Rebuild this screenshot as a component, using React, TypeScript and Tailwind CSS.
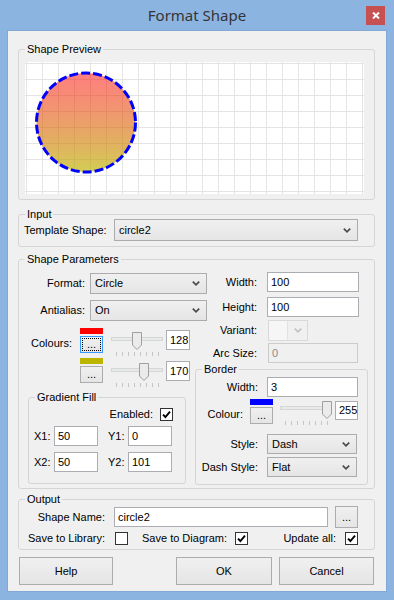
const ticks = [5, 11, 17, 23, 29, 35, 41, 47]

function Chevron({ color = '#4a4a4a' }: { color?: string }) {
  return (
    <svg width="8" height="5" viewBox="0 0 8 5">
      <path d="M0.8 0.6 L4 3.8 L7.2 0.6" fill="none" stroke={color} strokeWidth="1.7" />
    </svg>
  )
}

function Group({ title, className, children }: { title: string; className: string; children: React.ReactNode }) {
  return (
    <fieldset className={`rounded-[3px] border border-[#d5d5d5] ${className}`}>
      <legend className="ml-[6px] h-[12px] px-[2px] leading-[12px]">{title}</legend>
      {children}
    </fieldset>
  )
}

function Combo({ text, className }: { text: string; className: string }) {
  return (
    <div className={`flex shrink-0 items-center justify-between border border-[#acacac] bg-gradient-to-b from-[#f0f0f0] to-[#e5e5e5] pl-[4px] pr-[6px] ${className}`}>
      <span>{text}</span>
      <Chevron />
    </div>
  )
}

function TextBox({ text, className, disabled }: { text: string; className: string; disabled?: boolean }) {
  return (
    <div
      className={`flex shrink-0 items-center border px-[3px] ${
        disabled ? 'border-[#cccccc] bg-[#f0f0f0] text-[#8a8a8a]' : 'border-[#abadb3] bg-white'
      } ${className}`}
    >
      {text}
    </div>
  )
}

function Button({ text, className }: { text: string; className: string }) {
  return (
    <div className={`flex shrink-0 items-center justify-center border border-[#acacac] bg-gradient-to-b from-[#f0f0f0] to-[#e5e5e5] ${className}`}>
      {text}
    </div>
  )
}

function Checkbox({ checked, className = '' }: { checked?: boolean; className?: string }) {
  return (
    <div className={`flex h-[13px] w-[13px] shrink-0 items-center justify-center border border-[#333333] bg-white ${className}`}>
      {checked && (
        <svg width="9" height="9" viewBox="0 0 9 9">
          <path d="M1 4.6 L3.4 7 L8 1.6" fill="none" stroke="#000" strokeWidth="1.9" />
        </svg>
      )}
    </div>
  )
}

function Slider({ value, className }: { value: number; className: string }) {
  const x = Math.round((value / 255) * 42)
  return (
    <svg className={`shrink-0 ${className}`} width="52" height="24" viewBox="0 0 52 24">
      <rect x="0.5" y="5.5" width="51" height="3" fill="#e7eaea" stroke="#d6d6d6" />
      {ticks.map((t) => (
        <line key={t} x1={t + 0.5} x2={t + 0.5} y1="20" y2="24" stroke="#c4c4c4" />
      ))}
      <path d={`M${x + 0.5} 0.5 h9 v12.5 l-4.5 4.5 l-4.5 -4.5 z`} fill="#ebebeb" stroke="#9f9f9f" />
    </svg>
  )
}

function ColourPick({ colour, focused, className }: { colour: string; focused?: boolean; className: string }) {
  return (
    <div className={`w-[23px] shrink-0 ${className}`}>
      <div className="h-[6px]" style={{ background: colour }} />
      {focused ? (
        <div className="mt-[2px] h-[17px] border border-[#3399ff] bg-gradient-to-b from-[#f0f0f0] to-[#e5e5e5] p-[1px]">
          <div className="flex h-full items-center justify-center border border-dotted border-black leading-[11px]">...</div>
        </div>
      ) : (
        <Button text="..." className="mt-[2px] h-[17px] w-[23px]" />
      )}
    </div>
  )
}

function Preview() {
  return (
    <div className="ml-[6px] mt-[7px] h-[132px] w-[339px] bg-white bg-[linear-gradient(to_right,#e4e4e4_1px,transparent_1px),linear-gradient(to_bottom,#e4e4e4_1px,transparent_1px)] bg-[size:16px_16px] bg-[position:1px_1px]">
      <svg width="339" height="132" viewBox="0 0 339 132">
        <defs>
          <linearGradient id="fill" x1="0" y1="0" x2="0" y2="1">
            <stop offset="0" stopColor="rgb(255,0,0)" stopOpacity="0.5" />
            <stop offset="1" stopColor="rgb(188,182,0)" stopOpacity="0.67" />
          </linearGradient>
        </defs>
        <circle cx="61" cy="60.5" r="49.5" fill="url(#fill)" stroke="#0000ff" strokeWidth="3" strokeDasharray="9 3" />
      </svg>
    </div>
  )
}

export default function App() {
  return (
    <div className="h-[600px] w-[394px] overflow-hidden bg-[#8cb4e0] font-['Liberation_Sans',Arial,sans-serif] text-[11px] leading-[13px] text-black">
      <div className="grid h-[31px] grid-cols-[1fr_auto_1fr]">
        <div />
        <div className="self-center pb-[1px] font-['Noto_Sans',sans-serif] text-[15px] text-[#353535]">Format Shape</div>
        <div className="mr-[9px] mt-[6px] flex h-[19px] w-[19px] items-center justify-center justify-self-end bg-[#c75050]">
          <svg width="8" height="7" viewBox="0 0 8 7">
            <path d="M1 0.5 L7 6.5 M7 0.5 L1 6.5" stroke="#fff" strokeWidth="2" />
          </svg>
        </div>
      </div>

      <div className="mx-[8px] flex h-[560px] flex-col bg-[#f0f0f0] shadow-[0_0_0_1px_#82a8d6]">
        <Group title="Shape Preview" className="ml-[10px] mt-[12px] w-[357px] pb-[5px]">
          <Preview />
        </Group>

        <Group title="Input" className="ml-[10px] mt-[8px] w-[357px] pb-[5px]">
          <div className="-mt-[1px] flex items-center pl-[5px]">
            <span className="w-[90px] shrink-0">Template Shape:</span>
            <Combo text="circle2" className="h-[22px] w-[244px]" />
          </div>
        </Group>

        <Group title="Shape Parameters" className="ml-[10px] mt-[6px] w-[357px] pb-[3px]">
          <div className="flex">
            <div className="w-[176px] shrink-0">
              <div className="mt-[8px] flex items-center">
                <span className="w-[66px] shrink-0 text-right">Format:</span>
                <Combo text="Circle" className="ml-[5px] h-[21px] w-[117px]" />
              </div>
              <div className="mt-[6px] flex items-center">
                <span className="w-[66px] shrink-0 text-right">Antialias:</span>
                <Combo text="On" className="ml-[5px] h-[21px] w-[117px]" />
              </div>

              <div className="mt-[7px]">
                <div className="flex h-[30px] items-start">
                  <span className="mt-[9px] w-[53px] shrink-0 text-right">Colours:</span>
                  <ColourPick colour="#ff0000" focused className="ml-[8px]" />
                  <Slider value={128} className="ml-[8px] mt-[4px]" />
                  <TextBox text="128" className="ml-[3px] mt-[2px] h-[20px] w-[24px]" />
                </div>
                <div className="flex h-[30px] items-start">
                  <span className="w-[53px] shrink-0" />
                  <ColourPick colour="#bbb400" className="ml-[8px]" />
                  <Slider value={170} className="ml-[8px] mt-[5px]" />
                  <TextBox text="170" className="ml-[3px] mt-[3px] h-[20px] w-[24px]" />
                </div>
              </div>

              <Group title="Gradient Fill" className="ml-[9px] mt-[3px] w-[158px] pb-[11px]">
                <div className="mt-[5px] flex items-center justify-end pr-[12px]">
                  <span>Enabled:</span>
                  <Checkbox checked className="ml-[7px]" />
                </div>
                <div className="mt-[5px] flex items-center pl-[5px]">
                  <span className="w-[20px] shrink-0">X1:</span>
                  <TextBox text="50" className="h-[20px] w-[44px]" />
                  <span className="ml-[10px] w-[20px] shrink-0">Y1:</span>
                  <TextBox text="0" className="h-[20px] w-[44px]" />
                </div>
                <div className="mt-[6px] flex items-center pl-[5px]">
                  <span className="w-[20px] shrink-0">X2:</span>
                  <TextBox text="50" className="h-[20px] w-[44px]" />
                  <span className="ml-[10px] w-[20px] shrink-0">Y2:</span>
                  <TextBox text="101" className="h-[20px] w-[44px]" />
                </div>
              </Group>
            </div>

            <div className="w-[173px] shrink-0">
              <div className="mt-[7px] flex items-center">
                <span className="w-[62px] shrink-0 text-right">Width:</span>
                <TextBox text="100" className="ml-[10px] h-[20px] w-[92px]" />
              </div>
              <div className="mt-[5px] flex items-center">
                <span className="w-[62px] shrink-0 text-right">Height:</span>
                <TextBox text="100" className="ml-[10px] h-[20px] w-[92px]" />
              </div>
              <div className="mt-[3px] flex items-center">
                <span className="w-[62px] shrink-0 text-right">Variant:</span>
                <div className="ml-[11px] flex h-[21px] w-[40px] items-stretch border border-[#d9d9d9] bg-[#f0f0f0]">
                  <div className="w-[19px] border-r border-[#e2e2e2] bg-[#f6f6f6]" />
                  <div className="flex flex-1 items-center justify-center">
                    <Chevron color="#c2c2c2" />
                  </div>
                </div>
              </div>
              <div className="mt-[2px] flex items-center">
                <span className="w-[62px] shrink-0 text-right">Arc Size:</span>
                <TextBox text="0" disabled className="ml-[11px] h-[20px] w-[90px]" />
              </div>

              <Group title="Border" className="w-[173px] pb-[7px]">
                <div className="mt-[2px] flex items-center">
                  <span className="w-[62px] shrink-0 text-right">Width:</span>
                  <TextBox text="3" className="ml-[9px] h-[20px] w-[91px]" />
                </div>
                <div className="mt-[2px] flex h-[27px] items-start">
                  <span className="mt-[9px] w-[47px] shrink-0 text-right">Colour:</span>
                  <ColourPick colour="#0000ff" className="ml-[7px]" />
                  <Slider value={255} className="ml-[7px] mt-[2px]" />
                  <TextBox text="255" className="ml-[3px] mt-[2px] h-[19px] w-[23px]" />
                </div>
                <div className="mt-[8px] flex items-center">
                  <span className="w-[62px] shrink-0 text-right">Style:</span>
                  <Combo text="Dash" className="ml-[9px] h-[20px] w-[90px]" />
                </div>
                <div className="mt-[3px] flex items-center">
                  <span className="w-[62px] shrink-0 text-right">Dash Style:</span>
                  <Combo text="Flat" className="ml-[9px] h-[20px] w-[90px]" />
                </div>
              </Group>
            </div>
          </div>
        </Group>

        <Group title="Output" className="ml-[10px] mt-[4px] w-[357px] pb-[4px]">
          <div className="mt-[1px] flex h-[22px] items-center">
            <span className="w-[86px] shrink-0 text-right">Shape Name:</span>
            <TextBox text="circle2" className="ml-[9px] h-[20px] w-[214px]" />
            <Button text="..." className="ml-[7px] h-[22px] w-[23px]" />
          </div>
          <div className="mt-[4px] flex items-center">
            <span className="w-[86px] shrink-0 text-right">Save to Library:</span>
            <Checkbox className="ml-[10px]" />
            <span className="w-[99px] shrink-0 text-right">Save to Diagram:</span>
            <Checkbox checked className="ml-[8px]" />
            <span className="w-[88px] shrink-0 text-right">Update all:</span>
            <Checkbox checked className="ml-[9px]" />
          </div>
        </Group>

        <div className="mt-[7px] flex">
          <Button text="Help" className="ml-[11px] h-[28px] w-[94px]" />
          <Button text="OK" className="ml-[63px] h-[28px] w-[96px]" />
          <Button text="Cancel" className="ml-[7px] h-[28px] w-[95px]" />
        </div>
      </div>
    </div>
  )
}
